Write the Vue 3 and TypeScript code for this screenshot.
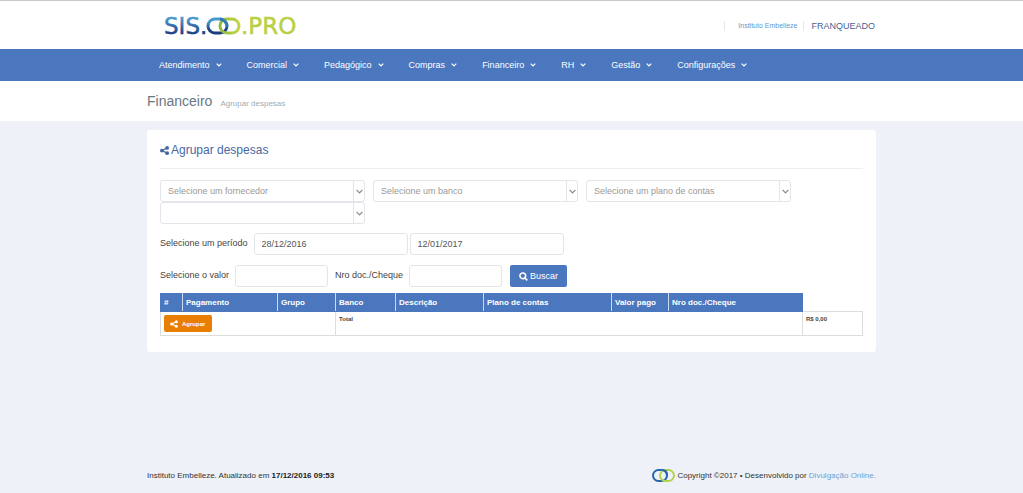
<script setup lang="ts">
import { ref } from 'vue'

interface Column {
  label: string
  name: string
}

const menu: string[] = ['Atendimento', 'Comercial', 'Pedagógico', 'Compras', 'Financeiro', 'RH', 'Gestão', 'Configurações']

const filters: { id: string; placeholder: string }[] = [
  { id: 'fornecedor', placeholder: 'Selecione um fornecedor' },
  { id: 'banco', placeholder: 'Selecione um banco' },
  { id: 'plano', placeholder: 'Selecione um plano de contas' },
  { id: 'outro', placeholder: '' },
]

const columns: Column[] = [
  { label: '#', name: 'mark' },
  { label: 'Pagamento', name: 'payment' },
  { label: 'Grupo', name: 'group' },
  { label: 'Banco', name: 'bank' },
  { label: 'Descrição', name: 'description' },
  { label: 'Plano de contas', name: 'plan' },
  { label: 'Valor pago', name: 'paid' },
  { label: 'Nro doc./Cheque', name: 'document' },
]

const start = ref('28/12/2016')
const end = ref('12/01/2017')
const amount = ref('')
const documentNumber = ref('')
</script>

<template>
  <div class="page">
    <header class="top">
      <div class="container top-inner">
        <a href="#" class="logo" aria-label="SIS.OO.PRO">
          <svg width="140" height="36" viewBox="0 0 140 36">
            <defs>
              <linearGradient id="logo-blue" x1="0" y1="0" x2="0" y2="1">
                <stop offset="0.2" stop-color="#4a9ad0" />
                <stop offset="0.8" stop-color="#1c3c82" />
              </linearGradient>
              <linearGradient id="logo-green" x1="0" y1="0" x2="1" y2="0">
                <stop offset="0" stop-color="#8fb93c" />
                <stop offset="1" stop-color="#c3d645" />
              </linearGradient>
            </defs>
            <text class="logo-text" x="0" y="26" fill="url(#logo-blue)" stroke="url(#logo-blue)">SIS.</text>
            <rect x="44" y="11" width="19" height="14" rx="7" fill="none" stroke="url(#logo-blue)" stroke-width="3" />
            <rect x="56" y="11" width="19" height="14" rx="7" fill="none" stroke="url(#logo-green)" stroke-width="3" />
            <path d="M56 11Q62 12 63 18" fill="none" stroke="#3579b8" stroke-width="3" />
            <text class="logo-text" x="77" y="26" fill="#b9d044" stroke="#b9d044">.PRO</text>
          </svg>
        </a>
        <div class="account">
          <a href="#" class="unit">Instituto Embelleze</a>
          <a href="#" class="role">FRANQUEADO</a>
        </div>
      </div>
    </header>

    <nav class="nav">
      <div class="container nav-inner">
        <a v-for="item in menu" :key="item" href="#">
          {{ item }}
          <svg width="6" height="4" viewBox="0 0 6 4"><path d="M.7.7 3 3 5.300.7" fill="none" stroke="currentColor" stroke-width="1.200" /></svg>
        </a>
      </div>
    </nav>

    <div class="heading">
      <div class="container heading-inner">
        <h1>Financeiro</h1>
        <small>Agrupar despesas</small>
      </div>
    </div>

    <main class="container">
      <section class="card">
        <h2>
          <svg width="9" height="9" viewBox="0 0 12 12" fill="currentColor">
            <circle cx="2.500" cy="6" r="2.500" /><circle cx="9.500" cy="2.500" r="2.500" /><circle cx="9.500" cy="9.500" r="2.500" />
            <path d="M9.500 2.500 2.500 6l7 3.500" fill="none" stroke="currentColor" stroke-width="1.600" />
          </svg>
          Agrupar despesas
        </h2>

        <form @submit.prevent>
          <div class="filters">
            <div v-for="filter in filters" :key="filter.id" class="select">
              <select :id="filter.id" :aria-label="filter.placeholder || 'Filtro'">
                <option>{{ filter.placeholder }}</option>
              </select>
              <span class="arrow">
                <svg width="7" height="5" viewBox="0 0 7 5"><path d="M.6.8 3.500 3.800 6.400.8" fill="none" stroke="currentColor" stroke-width="1.200" /></svg>
              </span>
            </div>
          </div>

          <div class="row">
            <label for="start">Selecione um período</label>
            <input id="start" v-model="start" type="text" class="date">
            <input v-model="end" type="text" class="date" aria-label="Fim do período">
          </div>

          <div class="row">
            <label for="amount">Selecione o valor</label>
            <input id="amount" v-model="amount" type="text" class="short">
            <label for="document" class="second">Nro doc./Cheque</label>
            <input id="document" v-model="documentNumber" type="text" class="short">
            <button type="submit" class="search">
              <svg width="9" height="9" viewBox="0 0 10 10" fill="none" stroke="currentColor" stroke-width="1.700"><circle cx="4.200" cy="4.200" r="3.200" /><path d="M6.500 6.500 9.300 9.300" /></svg>
              Buscar
            </button>
          </div>
        </form>

        <table>
          <colgroup>
            <col v-for="column in columns" :key="column.name" :class="column.name">
            <col>
          </colgroup>
          <thead>
            <tr>
              <th v-for="column in columns" :key="column.name" scope="col">{{ column.label }}</th>
            </tr>
          </thead>
          <tbody>
            <tr>
              <td colspan="3">
                <button type="button" class="group-button">
                  <svg width="8" height="8" viewBox="0 0 12 12" fill="currentColor">
                    <circle cx="2.500" cy="6" r="2.300" /><circle cx="9.500" cy="2.500" r="2.300" /><circle cx="9.500" cy="9.500" r="2.300" />
                    <path d="M9.500 2.500 2.500 6l7 3.500" fill="none" stroke="currentColor" stroke-width="1.600" />
                  </svg>
                  Agrupar
                </button>
              </td>
              <td colspan="5">Total</td>
              <td>R$ 0,00</td>
            </tr>
          </tbody>
        </table>
      </section>
    </main>

    <footer class="container footer">
      <p>Instituto Embelleze. Atualizado em <b>17/12/2016 09:53</b></p>
      <p class="credits">
        <svg width="23" height="14" viewBox="0 0 23 14" fill="none" stroke-width="2">
          <rect x="1" y="2" width="14" height="11" rx="5.500" stroke="#2864ad" />
          <rect x="8" y="2" width="14" height="11" rx="5.500" stroke="#b3d34b" />
          <path d="M10 2Q15 2 15 7" stroke="#2864ad" />
        </svg>
        <span>Copyright ©2017 • Desenvolvido por <a href="#">Divulgação Online.</a></span>
      </p>
    </footer>
  </div>
</template>

<style>
body {
  background: #eef1f8;
}
</style>

<style scoped>
.page {
  display: flex;
  flex-direction: column;
  min-height: 100vh;
  font-family: "Liberation Sans", Arial, sans-serif;
  font-size: 9px;
  color: #444;
}

.page *,
.page {
  box-sizing: border-box;
}

a {
  text-decoration: none;
}

.container {
  width: 100%;
  max-width: 729px;
  margin: 0 auto;
}

.top {
  border-top: 1px solid #c9c9cb;
  background: #fff;
}

.top-inner {
  display: flex;
  align-items: center;
  justify-content: space-between;
  height: 48px;
  padding: 2px 1px 0 17px;
}

.logo svg {
  display: block;
}

.logo-text {
  font-family: "DejaVu Sans", sans-serif;
  font-size: 23px;
  stroke-width: 0.5px;
}

.account {
  display: flex;
  align-items: center;
}

.unit {
  padding: 0 6px 0 13px;
  border: solid #e4e8ee;
  border-width: 0 1px;
  font-size: 7px;
  line-height: 10px;
  color: #5b9bd1;
}

.role {
  padding-left: 7px;
  color: #4a6190;
}

.nav {
  background: #4b77be;
}

.nav-inner {
  display: flex;
  align-items: center;
  gap: 25px;
  height: 32px;
  padding: 0 12px;
}

.nav a {
  display: flex;
  align-items: center;
  gap: 6px;
  color: #fff;
}

.heading {
  background: #fff;
}

.heading-inner {
  display: flex;
  align-items: baseline;
  gap: 8px;
  height: 40px;
  padding-top: 12px;
}

h1 {
  margin: 0;
  font-size: 14px;
  font-weight: 400;
  line-height: 16px;
  color: #697882;
}

.heading small {
  font-size: 8px;
  color: #9eacb4;
}

.card {
  margin-top: 9px;
  padding: 12px 13px 16px;
  border-radius: 3px;
  background: #fff;
}

h2 {
  display: flex;
  align-items: center;
  gap: 2px;
  margin: 0 0 11px;
  padding-bottom: 10px;
  border-bottom: 1px solid #eee;
  font-size: 12px;
  font-weight: 400;
  line-height: 16px;
  color: #4668a4;
}

.filters {
  display: flex;
  flex-wrap: wrap;
  column-gap: 8px;
}

.select {
  display: grid;
  grid-template-columns: 1fr 12px;
  width: 205px;
}

select,
input {
  height: 22px;
  border: 1px solid #e2e5ea;
  border-radius: 3px;
  background: #fff;
  font-family: inherit;
  font-size: 9px;
  color: #555;
}

select {
  grid-area: 1 / 1 / 2 / 3;
  width: 100%;
  padding: 0 7px;
  appearance: none;
  color: #999;
}

.arrow {
  grid-area: 1 / 2;
  display: flex;
  align-items: center;
  justify-content: center;
  border-left: 1px solid #e2e5ea;
  color: #888;
  pointer-events: none;
}

.row {
  display: flex;
  align-items: center;
  margin-top: 10px;
}

.filters + .row {
  margin-top: 9px;
}

.row label {
  padding: 0 6px 2px 0;
}

input {
  padding: 0 7px;
}

.date {
  width: 154px;
}

.date + .date {
  margin-left: 2px;
}

.short {
  width: 93px;
}

.row .second {
  padding-left: 7px;
}

button {
  display: flex;
  align-items: center;
  border: 0;
  border-radius: 2px;
  font-family: inherit;
  color: #fff;
}

.search {
  gap: 2px;
  height: 22px;
  margin-left: 8px;
  padding: 0 9px;
  background: #4b77be;
  font-size: 9px;
}

table {
  width: 100%;
  margin-top: 6px;
  border-collapse: collapse;
  table-layout: fixed;
}

.mark { width: 22px; }
.payment { width: 95px; }
.group { width: 58px; }
.bank { width: 60px; }
.description { width: 88px; }
.plan { width: 128px; }
.paid { width: 57px; }
.document { width: 134px; }

th {
  height: 18px;
  padding: 0 3px;
  border: 1px solid #4b77be;
  border-right-color: #ccd9ee;
  background: #4b77be;
  font-size: 8px;
  line-height: 10px;
  text-align: left;
  white-space: nowrap;
  color: #fff;
}

th:last-child {
  border-right-color: #4b77be;
}

td {
  height: 24px;
  padding: 3px;
  border: 1px solid #ddd;
  font-size: 6px;
  font-weight: 700;
  line-height: 8px;
  vertical-align: top;
}

.group-button {
  gap: 4px;
  height: 17px;
  padding: 0 7px 0 6px;
  background: #e87e04;
  font-size: 6px;
  font-weight: 700;
}

.footer {
  display: flex;
  align-items: center;
  justify-content: space-between;
  margin-top: auto;
  padding-bottom: 11px;
  font-size: 8px;
  color: #333;
}

.footer p {
  margin: 0;
}

.footer b {
  color: #222;
}

.footer .credits {
  display: flex;
  align-items: center;
  gap: 2px;
}

.credits a {
  color: #6fa3d2;
}
</style>
